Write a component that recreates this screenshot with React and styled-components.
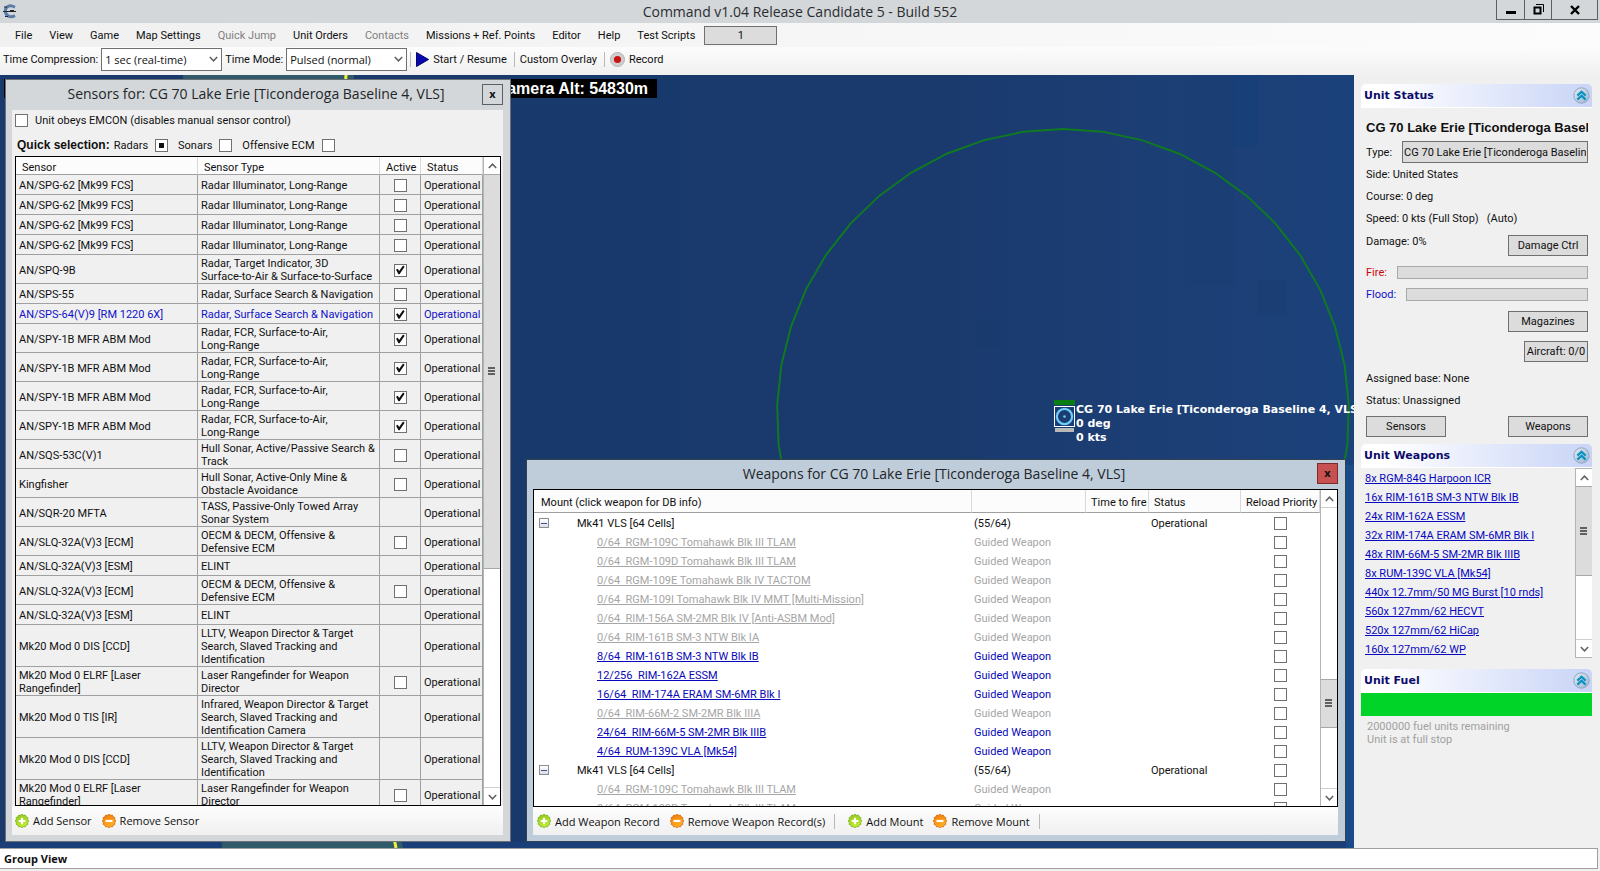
import React, { useEffect, useRef } from 'react';
import styled, { createGlobalStyle, css } from 'styled-components';

const ui = 'Roboto, "Liberation Sans", sans-serif';
const segoe = '"Open Sans", "Noto Sans", sans-serif';

const GlobalStyle = createGlobalStyle`
  *, *::before, *::after { box-sizing: border-box; }
  body { margin: 0; background: #f0f0f0; color: #101010; font: 11px/13px ${ui}; }
  button, input, select { font: inherit; color: inherit; margin: 0; border-radius: 0; }
`;

/* ---------- application frame ---------- */

const Shell = styled.div`
  display: flex;
  flex-direction: column;
  min-height: 100vh;
  overflow: hidden;
`;

const TitleBar = styled.header`
  display: grid;
  grid-template-columns: 1fr auto 1fr;
  align-items: center;
  height: 23px;
  background: #d3d7d9;
`;

const AppIcon = styled.svg`
  width: 15px;
  height: 15px;
  margin-left: 2px;
`;

const AppTitle = styled.h1`
  margin: 0;
  font: 14px/22px ${segoe};
  color: #2a2d30;
`;

const CaptionButtons = styled.div`
  display: flex;
  align-self: start;
  justify-self: end;
  margin-right: 2px;
  border: 1px solid #5d6063;
  border-top: 0;
`;

const CaptionButton = styled.button`
  display: flex;
  align-items: center;
  justify-content: center;
  width: ${(p) => (p.$wide ? 46 : 27)}px;
  height: 19px;
  padding: 0;
  border: 0;
  background: #d3d7d9;
  & + & { border-left: 1px solid #5d6063; }
`;

const MenuBar = styled.nav`
  display: flex;
  align-items: center;
  gap: 1px;
  height: 24px;
  padding-left: 7px;
  background: linear-gradient(90deg, #f0f0f0, #fcfcfc);
`;

const MenuItem = styled.button`
  padding: 0 8px;
  border: 0;
  background: none;
  white-space: nowrap;
  &:disabled { color: #808080; }
`;

const ScriptButton = styled.button`
  width: 73px;
  height: 19px;
  padding: 0;
  border: 1px solid #707070;
  background: #dcdcdc;
`;

const ToolStrip = styled.div`
  display: flex;
  align-items: center;
  height: 28px;
  padding: 0 3px 4px;
  background: linear-gradient(#fcfcfc, #f0f0f0);
`;

const ToolLabel = styled.label`
  margin-right: 3px;
  white-space: nowrap;
`;

const SelectBox = styled.span`
  position: relative;
  margin-right: 3px;
  svg { position: absolute; right: 4px; top: 8px; pointer-events: none; }
`;

const Select = styled.select`
  display: block;
  width: 121px;
  height: 23px;
  padding: 0 3px;
  appearance: none;
  border: 1px solid #707070;
  background: #fff;
  font: 11px/15px ${segoe};
`;

const Separator = styled.span`
  width: 1px;
  height: 15px;
  margin: 0 4px 0 ${(p) => (p.$spread ? 6 : 0)}px;
  background: #b8b8b8;
`;

const ToolButton = styled.button`
  display: flex;
  align-items: center;
  gap: 4px;
  padding: 0 1px;
  border: 0;
  background: none;
  white-space: nowrap;
`;

const Workspace = styled.main`
  display: grid;
  grid-template-columns: minmax(0, 1fr) 246px;
  flex: 1;
`;

const StatusBar = styled.footer`
  height: 21px;
  margin: 0 2px 2px 0;
  padding-left: 4px;
  border: 1px solid #a0a0a0;
  border-left: 0;
  background: #fff;
  font: bold 11px/20px ${segoe};
`;

/* ---------- map and what floats on it ---------- */

const MapView = styled.section`
  position: relative;
  overflow: hidden;
  background: linear-gradient(90deg, #1a396c 65%, #1c4077 92%, #1b417b);
`;

const MapCanvas = styled.svg`
  position: absolute;
  width: 100%;
  height: 100%;
`;

const CameraReadout = styled.div`
  position: absolute;
  left: 4px;
  top: 4px;
  width: 653px;
  padding-right: 9px;
  background: #000;
  color: #fff;
  font: bold 16px/19px "Liberation Sans", sans-serif;
  text-align: right;
`;

const UnitMarker = styled.div`
  position: absolute;
  left: 1054px;
  top: 325px;
  display: flex;
  gap: 1px;
  color: #fff;
  font: bold 11px/14px "DejaVu Sans", sans-serif;
  white-space: nowrap;
  svg { flex: none; }
`;

const MarkerText = styled.div`
  padding-top: 3px;
`;

const Win = styled.section`
  position: absolute;
  display: flex;
  flex-direction: column;
  padding: 0 7px 6px 6px;
  border: 1px solid ${(p) => (p.$active ? '#33424f' : '#6a7075')};
  background: ${(p) => (p.$active ? '#bfcddb' : '#d3d7d9')};
  bottom: 6px;
  ${(p) => (p.$active
    ? css`left: 526px; right: 8px; top: 384px;`
    : css`left: 5px; width: 506px; top: 4px;`)}
`;

const WinTitle = styled.h2`
  flex: 1;
  margin: 0;
  padding-left: 18px;
  text-align: center;
  font: 14px/20px ${segoe};
  color: #22262a;
  white-space: nowrap;
`;

const WinHead = styled.div`
  display: flex;
  align-items: center;
  height: ${(p) => (p.$active ? 29 : 30)}px;
  padding-bottom: 2px;
`;

const WinClose = styled.button`
  width: 21px;
  height: 21px;
  padding: 0 0 2px;
  border: 1px solid ${(p) => (p.$active ? '#7d2b28' : '#5d6063')};
  background: ${(p) => (p.$active ? '#c75050' : '#d3d7d9')};
  font: bold 11px/13px ${segoe};
`;

const WinClient = styled.div`
  display: flex;
  flex: 1;
  flex-direction: column;
  min-height: 0;
  background: #f0f0f0;
`;

const OptionRow = styled.div`
  display: flex;
  align-items: center;
  height: ${(p) => (p.$first ? 20 : 26)}px;
  padding: ${(p) => (p.$first ? 0 : 4)}px 3px 0;
`;

const Option = styled.label`
  display: flex;
  align-items: center;
  gap: 7px;
  margin-right: 10px;
`;

const Lead = styled.strong`
  margin: 0 4px 0 2px;
  font: bold 12px/13px "Liberation Sans", sans-serif;
`;

const Tick = styled.input`
  display: block;
  flex: none;
  width: 13px;
  height: 13px;
  appearance: none;
  border: 1px solid #707070;
  background: #fff;
  &:checked::before {
    content: '';
    display: block;
    width: 11px;
    height: 11px;
    background: #101010;
    clip-path: polygon(14% 48%, 30% 38%, 42% 58%, 78% 10%, 92% 20%, 46% 88%, 36% 88%);
  }
  &:indeterminate::before {
    content: '';
    display: block;
    width: 5px;
    height: 5px;
    margin: 3px;
    background: #101010;
  }
`;

const Frame = styled.div`
  display: flex;
  flex: 1;
  min-height: 0;
  margin: 0 ${(p) => (p.$inset ? '2px 0 3px' : 0)};
  border: 1px solid #000;
  background: ${(p) => (p.$inset ? '#f0f0f0' : '#fff')};
`;

const Viewport = styled.div`
  position: relative;
  flex: 1;
  min-width: 0;
  overflow: hidden;
  contain: size;
`;

const Grid = styled.table`
  width: 100%;
  table-layout: fixed;
  border-collapse: separate;
  border-spacing: 0;
  th, td { white-space: pre; overflow: hidden; }
  th {
    font-weight: normal;
    text-align: left;
    background: #fcfcfc;
    border-right: 1px solid #d9d9d9;
    border-bottom: 1px solid #a0a0a0;
  }
`;

const SensorGrid = styled(Grid)`
  th { height: 18px; padding: 3px 5px 0 6px; }
  td {
    height: 20px;
    padding: 2px 3px 0;
    border-right: 1px solid #a0a0a0;
    border-bottom: 1px solid #a0a0a0;
  }
  input { margin: 0 auto; }
`;

const SensorRow = styled.tr`
  color: ${(p) => (p.$selected ? '#1010c8' : 'inherit')};
`;

const WeaponGrid = styled(Grid)`
  th { height: 23px; padding: 3px 5px 0; }
  th:first-child { padding-left: 7px; }
  td { height: 19px; padding: 1px 2px 0; }
  input { margin: 0 auto; }
`;

const tone = { off: '#a6a6a6', on: '#0808b8', mount: 'inherit' };

const WeaponRow = styled.tr`
  color: ${(p) => tone[p.$tone]};
  a { margin-left: 61px; color: inherit; }
`;

const MountName = styled.div`
  display: flex;
  align-items: center;
  gap: 28px;
  padding-left: 3px;
`;

const Expander = styled.button`
  display: grid;
  place-items: center;
  width: 10px;
  height: 10px;
  padding: 0;
  border: 1px solid #8c8c94;
  background: linear-gradient(#fff, #dcdce4);
  &::before { content: ''; width: 6px; height: 1px; background: #3c508c; }
`;

const WinTools = styled.div`
  display: flex;
  align-items: center;
  height: ${(p) => (p.$active ? 28 : 29)}px;
  padding-left: ${(p) => (p.$active ? 3 : 2)}px;
  gap: 8px;
  background: linear-gradient(#fdfdfd, #f0f0f0);
  font: 11px/15px ${segoe};
`;

/* ---------- scroll bar ---------- */

const Bar = styled.div`
  display: flex;
  flex: none;
  flex-direction: column;
  width: 17px;
  background: #fff;
  border-left: 1px solid #b4b4b4;
`;

const BarButton = styled.button`
  display: grid;
  place-items: center;
  height: 17px;
  padding: 0;
  border: 0;
  background: #fff;
`;

const BarSpace = styled.div`
  flex: ${(p) => p.$share};
  border: solid #d0d0d0;
  border-width: ${(p) => (p.$upper ? '1px 0 0' : '0 0 1px')};
`;

const BarThumb = styled.div`
  display: grid;
  place-items: center;
  flex: ${(p) => p.$share};
  border: solid #a8a8a8;
  border-width: 1px 0;
  background: #dcdcdc;
`;

/* ---------- side panel ---------- */

const SidePanel = styled.aside`
  padding: 9px 8px 0 7px;
  background: #f0f0f0;
`;

const SectionHead = styled.h2`
  display: flex;
  align-items: center;
  justify-content: space-between;
  height: 24px;
  margin: 0;
  padding: 0 2px 0 3px;
  border-bottom: 1px solid #fff;
  border-radius: 5px 5px 0 0;
  background: linear-gradient(90deg, #fff 10%, #c9d4f7);
  color: #0c0c6c;
  font: bold 11px/14px "DejaVu Sans", sans-serif;
`;

const FoldButton = styled.button`
  display: block;
  width: 17px;
  height: 17px;
  padding: 0;
  border: 0;
  background: none;
  svg { display: block; }
`;

const StatusBody = styled.div`
  padding: 9px 4px 7px 5px;
`;

const UnitName = styled.h3`
  margin: 0 0 2px;
  overflow: hidden;
  white-space: nowrap;
  font: bold 13px/22px "Liberation Sans", sans-serif;
`;

const Field = styled.div`
  display: flex;
  align-items: center;
  justify-content: space-between;
  height: 22px;
  gap: 10px;
  white-space: pre;
  color: ${(p) => p.$color || 'inherit'};
`;

const DamageField = styled(Field)`
  align-items: flex-end;
  height: 32px;
  padding-bottom: 5px;
  span { padding-bottom: 8px; }
`;

const TypeBox = styled.input`
  flex: 1;
  min-width: 0;
  height: 22px;
  padding: 0 1px;
  border: 1px solid #707070;
  background: #dcdcdc;
`;

const Meter = styled.div`
  flex: 1;
  height: 13px;
  border: 1px solid #a8a8a8;
  background: #dcdcdc;
`;

const PanelButton = styled.button`
  width: ${(p) => (p.$small ? 64 : 80)}px;
  height: 21px;
  padding: 0;
  border: 1px solid #707070;
  background: #dcdcdc;
`;

const ButtonStack = styled.div`
  display: flex;
  flex-direction: column;
  align-items: flex-end;
  gap: 9px;
  padding: 6px 0 5px;
`;

const ButtonPair = styled.div`
  display: flex;
  justify-content: space-between;
  padding-top: 5px;
`;

const WeaponList = styled.div`
  display: flex;
  height: 190px;
  margin-bottom: 11px;
  ul { flex: 1; margin: 0; padding: 1px 4px; list-style: none; }
  li { line-height: 19px; white-space: pre; }
  a { color: #0808c0; }
`;

const PanelBar = styled(Bar)`
  border: 1px solid #b4b4b4;
  border-right: 0;
`;

const FuelGauge = styled.div`
  height: 23px;
  margin-bottom: 4px;
  background: #00d428;
`;

const FuelNote = styled.p`
  margin: 0;
  padding-left: 6px;
  color: #a0a0a0;
`;

/* ---------- drawings ---------- */

const Chevron = ({ up, size = 9, color = '#606060' }) => (
  <svg width={size} height={6} viewBox="0 0 9 6" aria-hidden="true">
    <path d={up ? 'M0.8 5 L4.5 1.2 L8.2 5' : 'M0.8 1 L4.5 4.8 L8.2 1'} fill="none" stroke={color} strokeWidth="1.5" />
  </svg>
);

const burst = Array.from({ length: 24 }, (_, i) => {
  const a = (i * Math.PI) / 12;
  const r = i % 2 ? 5.9 : 6.8;
  return `${(7 + r * Math.sin(a)).toFixed(2)},${(7 - r * Math.cos(a)).toFixed(2)}`;
}).join(' ');

const Badge = ({ minus }) => {
  const id = minus ? 'badge-minus' : 'badge-plus';
  return (
    <svg width="14" height="14" viewBox="0 0 14 14" aria-hidden="true">
      <defs>
        <linearGradient id={id} x1="0" y1="0" x2="0.4" y2="1">
          <stop offset="0" stopColor={minus ? '#f07808' : '#8cc41c'} />
          <stop offset="1" stopColor={minus ? '#ffb020' : '#c0ec30'} />
        </linearGradient>
      </defs>
      <polygon points={burst} fill={`url(#${id})`} stroke={minus ? '#d06008' : '#74a818'} strokeWidth="0.7" />
      <path d={minus ? 'M3.5 7 H10.5' : 'M3.7 7 H10.3 M7 3.7 V10.3'} stroke="#fff" strokeWidth="2.2" />
    </svg>
  );
};

const FoldIcon = () => (
  <svg width="17" height="17" viewBox="0 0 17 17" aria-hidden="true">
    <defs>
      <linearGradient id="fold" x1="0" y1="0" x2="1" y2="1">
        <stop offset="0" stopColor="#e4ecf4" />
        <stop offset="1" stopColor="#9cb4d0" />
      </linearGradient>
    </defs>
    <circle cx="8.5" cy="8.5" r="7.7" fill="url(#fold)" stroke="#8fa6bc" />
    <path d="M4.4 8.6 L8.5 4.8 L12.6 8.6 M4.4 12.6 L8.5 8.8 L12.6 12.6" fill="none" stroke="#0894c0" strokeWidth="2.2" />
  </svg>
);

const Grip = () => (
  <svg width="8" height="9" viewBox="0 0 8 9" aria-hidden="true">
    <path d="M0 1 H7 M0 4 H7 M0 7 H7" stroke="#606060" strokeWidth="2" />
  </svg>
);

/* ---------- data ---------- */

const mfr = ['AN/SPY-1B MFR ABM Mod', 'Radar, FCR, Surface-to-Air,\nLong-Range', true];
const spg = ['AN/SPG-62 [Mk99 FCS]', 'Radar Illuminator, Long-Range', false];
const ecm = ['AN/SLQ-32A(V)3 [ECM]', 'OECM & DECM, Offensive &\nDefensive ECM', false];
const esm = ['AN/SLQ-32A(V)3 [ESM]', 'ELINT'];
const ccd = ['Mk20 Mod 0 DIS [CCD]', 'LLTV, Weapon Director & Target\nSearch, Slaved Tracking and\nIdentification'];
const laser = ['Mk20 Mod 0 ELRF [Laser\nRangefinder]', 'Laser Rangefinder for Weapon\nDirector', false];

const sensors = [
  spg, spg, spg, spg,
  ['AN/SPQ-9B', 'Radar, Target Indicator, 3D\nSurface-to-Air & Surface-to-Surface', true],
  ['AN/SPS-55', 'Radar, Surface Search & Navigation', false],
  ['AN/SPS-64(V)9 [RM 1220 6X]', 'Radar, Surface Search & Navigation', true, true],
  mfr, mfr, mfr, mfr,
  ['AN/SQS-53C(V)1', 'Hull Sonar, Active/Passive Search &\nTrack', false],
  ['Kingfisher', 'Hull Sonar, Active-Only Mine &\nObstacle Avoidance', false],
  ['AN/SQR-20 MFTA', 'TASS, Passive-Only Towed Array\nSonar System'],
  ecm, esm, ecm, esm, ccd, laser,
  ['Mk20 Mod 0 TIS [IR]', 'Infrared, Weapon Director & Target\nSearch, Slaved Tracking and\nIdentification Camera'],
  ccd, laser,
];

const mount = ['mount', 'Mk41 VLS [64 Cells]'];
const weapons = [
  mount,
  ['off', '0/64  RGM-109C Tomahawk Blk III TLAM'],
  ['off', '0/64  RGM-109D Tomahawk Blk III TLAM'],
  ['off', '0/64  RGM-109E Tomahawk Blk IV TACTOM'],
  ['off', '0/64  RGM-109I Tomahawk Blk IV MMT [Multi-Mission]'],
  ['off', '0/64  RIM-156A SM-2MR Blk IV [Anti-ASBM Mod]'],
  ['off', '0/64  RIM-161B SM-3 NTW Blk IA'],
  ['on', '8/64  RIM-161B SM-3 NTW Blk IB'],
  ['on', '12/256  RIM-162A ESSM'],
  ['on', '16/64  RIM-174A ERAM SM-6MR Blk I'],
  ['off', '0/64  RIM-66M-2 SM-2MR Blk IIIA'],
  ['on', '24/64  RIM-66M-5 SM-2MR Blk IIIB'],
  ['on', '4/64  RUM-139C VLA [Mk54]'],
  mount,
  ['off', '0/64  RGM-109C Tomahawk Blk III TLAM'],
  ['off', '0/64  RGM-109D Tomahawk Blk III TLAM'],
];

const loadout = [
  '8x RGM-84G Harpoon ICR', '16x RIM-161B SM-3 NTW Blk IB', '24x RIM-162A ESSM',
  '32x RIM-174A ERAM SM-6MR Blk I', '48x RIM-66M-5 SM-2MR Blk IIIB', '8x RUM-139C VLA [Mk54]',
  '440x 12.7mm/50 MG Burst [10 rnds]', '560x 127mm/62 HECVT', '520x 127mm/62 HiCap', '160x 127mm/62 WP',
];

const menus = ['File', 'View', 'Game', 'Map Settings', 'Quick Jump', 'Unit Orders', 'Contacts',
  'Missions + Ref. Points', 'Editor', 'Help', 'Test Scripts'];

const unit = 'CG 70 Lake Erie [Ticonderoga Baseline 4, VLS]';

const rangeRing = Array.from({ length: 45 }, (_, i) => {
  const a = (i * 8 * Math.PI) / 180;
  return `${(1063 + 286 * Math.sin(a)).toFixed(1)},${(340 - 286 * Math.cos(a)).toFixed(1)}`;
}).join(' ');

/* ---------- parts ---------- */

function MixedTick(props) {
  const ref = useRef(null);
  useEffect(() => { ref.current.indeterminate = true; }, []);
  return <Tick type="checkbox" ref={ref} {...props} />;
}

function ScrollBar({ as: Part = Bar, before = 0, thumb, after }) {
  return (
    <Part>
      <BarButton aria-label="Scroll up"><Chevron up /></BarButton>
      {before > 0 && <BarSpace $upper $share={before} />}
      <BarThumb $share={thumb}><Grip /></BarThumb>
      <BarSpace $share={after} />
      <BarButton aria-label="Scroll down"><Chevron /></BarButton>
    </Part>
  );
}

function TacticalMap() {
  return (
    <MapCanvas aria-hidden="true">
      <rect x="1186" y="0" width="49" height="210" fill="#1b3d73" opacity="0.6" />
      <rect x="1230" y="0" width="28" height="71" fill="#16407a" opacity="0.6" />
      <rect x="1257" y="205" width="30" height="35" fill="#1a3b70" opacity="0.5" />
      <rect x="976" y="244" width="24" height="28" fill="#173a6c" opacity="0.6" />
      <rect x="510" y="0" width="170" height="773" fill="#133a6c" opacity="0.5" />
      <path d="M1346 390 H1400 V773 H1346 Z" fill="#1a4a88" />
      <path d="M0 767 H1346 V773 H0 Z" fill="#1a3f78" />
      <path d="M183 0 H354 L330 380 L403 773 H222 Z" fill="#305a6a" />
      <path d="M346 0 L320 380 L396 773" fill="none" stroke="#f4f038" strokeWidth="3" />
      <polygon points={rangeRing} fill="none" stroke="#0f7a22" strokeWidth="2" />
    </MapCanvas>
  );
}

function SensorsWindow() {
  return (
    <Win>
      <WinHead>
        <WinTitle>Sensors for: {unit}</WinTitle>
        <WinClose aria-label="Close sensors">x</WinClose>
      </WinHead>
      <WinClient>
        <OptionRow $first>
          <Option><Tick type="checkbox" />Unit obeys EMCON (disables manual sensor control)</Option>
        </OptionRow>
        <OptionRow>
          <Lead>Quick selection:</Lead>
          <Option>Radars<MixedTick /></Option>
          <Option>Sonars<Tick type="checkbox" /></Option>
          <Option>Offensive ECM<Tick type="checkbox" /></Option>
        </OptionRow>
        <Frame $inset>
          <Viewport>
            <SensorGrid>
              <colgroup><col /><col style={{ width: 182 }} /><col style={{ width: 41 }} /><col style={{ width: 62 }} /></colgroup>
              <thead><tr><th>Sensor</th><th>Sensor Type</th><th>Active</th><th>Status</th></tr></thead>
              <tbody>
                {sensors.map(([name, type, active, selected], i) => (
                  <SensorRow key={i} $selected={selected}>
                    <td>{name}</td>
                    <td>{type}</td>
                    <td>{active !== undefined && <Tick type="checkbox" defaultChecked={active} aria-label={`${name} active`} />}</td>
                    <td>Operational</td>
                  </SensorRow>
                ))}
              </tbody>
            </SensorGrid>
          </Viewport>
          <ScrollBar thumb={395} after={219} />
        </Frame>
        <WinTools>
          <ToolButton><Badge />Add Sensor</ToolButton>
          <ToolButton><Badge minus />Remove Sensor</ToolButton>
        </WinTools>
      </WinClient>
    </Win>
  );
}

function WeaponsWindow() {
  return (
    <Win $active>
      <WinHead $active>
        <WinTitle>Weapons for {unit}</WinTitle>
        <WinClose $active aria-label="Close weapons">x</WinClose>
      </WinHead>
      <WinClient>
        <Frame>
          <Viewport>
            <WeaponGrid>
              <colgroup>
                <col /><col style={{ width: 114 }} /><col style={{ width: 63 }} /><col style={{ width: 92 }} /><col style={{ width: 79 }} />
              </colgroup>
              <thead>
                <tr><th>Mount (click weapon for DB info)</th><th aria-label="Kind" /><th>Time to fire</th><th>Status</th><th>Reload Priority</th></tr>
              </thead>
              <tbody>
                {weapons.map(([kind, name], i) => (
                  <WeaponRow key={i} $tone={kind}>
                    <td>{kind === 'mount' ? <MountName><Expander aria-label="Collapse" />{name}</MountName> : <a href="#weapon">{name}</a>}</td>
                    <td>{kind === 'mount' ? '(55/64)' : 'Guided Weapon'}</td>
                    <td />
                    <td>{kind === 'mount' ? 'Operational' : ''}</td>
                    <td><Tick type="checkbox" aria-label={`${name} reload priority`} /></td>
                  </WeaponRow>
                ))}
              </tbody>
            </WeaponGrid>
          </Viewport>
          <ScrollBar before={173} thumb={48} after={61} />
        </Frame>
        <WinTools $active>
          <ToolButton><Badge />Add Weapon Record</ToolButton>
          <ToolButton><Badge minus />Remove Weapon Record(s)</ToolButton>
          <Separator />
          <ToolButton><Badge />Add Mount</ToolButton>
          <ToolButton><Badge minus />Remove Mount</ToolButton>
          <Separator />
        </WinTools>
      </WinClient>
    </Win>
  );
}

function SectionTitle({ children }) {
  return (
    <SectionHead>
      {children}
      <FoldButton aria-label={`Fold ${children}`}><FoldIcon /></FoldButton>
    </SectionHead>
  );
}

function UnitPanel() {
  return (
    <SidePanel>
      <SectionTitle>Unit Status</SectionTitle>
      <StatusBody>
        <UnitName>{unit}</UnitName>
        <Field as="label">Type:<TypeBox readOnly defaultValue={unit} /></Field>
        <Field>Side: United States</Field>
        <Field>Course: 0 deg</Field>
        <Field>{'Speed: 0 kts (Full Stop)   (Auto)'}</Field>
        <DamageField><span>Damage: 0%</span><PanelButton>Damage Ctrl</PanelButton></DamageField>
        <Field $color="#c80808">Fire:<Meter /></Field>
        <Field $color="#1010c8">Flood:<Meter /></Field>
        <ButtonStack>
          <PanelButton>Magazines</PanelButton>
          <PanelButton $small>Aircraft: 0/0</PanelButton>
        </ButtonStack>
        <Field>Assigned base: None</Field>
        <Field>Status: Unassigned</Field>
        <ButtonPair>
          <PanelButton>Sensors</PanelButton>
          <PanelButton>Weapons</PanelButton>
        </ButtonPair>
      </StatusBody>
      <SectionTitle>Unit Weapons</SectionTitle>
      <WeaponList>
        <ul>{loadout.map((w) => <li key={w}><a href="#weapon">{w}</a></li>)}</ul>
        <ScrollBar as={PanelBar} thumb={91} after={65} />
      </WeaponList>
      <SectionTitle>Unit Fuel</SectionTitle>
      <FuelGauge />
      <FuelNote>2000000 fuel units remaining</FuelNote>
      <FuelNote>Unit is at full stop</FuelNote>
    </SidePanel>
  );
}

export default function App() {
  return (
    <Shell>
      <GlobalStyle />
      <TitleBar>
        <AppIcon viewBox="0 0 15 15" aria-hidden="true">
          <path d="M13 3.2 C7 0 3 3 3.4 7.5 C3.8 12 8 14 13 11.6" fill="none" stroke="#5c7ca8" strokeWidth="3" />
          <path d="M1 7.5 H14 M8 6.5 H12 M2 3 H5 M3 12.5 H6" stroke="#20242c" strokeWidth="1" />
        </AppIcon>
        <AppTitle>Command v1.04 Release Candidate 5 - Build 552</AppTitle>
        <CaptionButtons>
          <CaptionButton aria-label="Minimise">
            <svg width="11" height="11"><path d="M1 8.5 H11" stroke="#000" strokeWidth="3" /></svg>
          </CaptionButton>
          <CaptionButton aria-label="Restore">
            <svg width="11" height="11">
              <path d="M3 0.5 H10.5 V8" fill="none" stroke="#000" />
              <rect x="1.5" y="3.5" width="6" height="6" fill="none" stroke="#000" strokeWidth="2" />
            </svg>
          </CaptionButton>
          <CaptionButton $wide aria-label="Close">
            <svg width="10" height="10"><path d="M1 1 L9 9 M9 1 L1 9" stroke="#000" strokeWidth="2.4" /></svg>
          </CaptionButton>
        </CaptionButtons>
      </TitleBar>
      <MenuBar>
        {menus.map((m) => <MenuItem key={m} disabled={m === 'Quick Jump' || m === 'Contacts'}>{m}</MenuItem>)}
        <ScriptButton>1</ScriptButton>
      </MenuBar>
      <ToolStrip>
        <ToolLabel htmlFor="compression">Time Compression:</ToolLabel>
        <SelectBox>
          <Select id="compression"><option>1 sec (real-time)</option></Select>
          <Chevron />
        </SelectBox>
        <ToolLabel htmlFor="mode">Time Mode:</ToolLabel>
        <SelectBox>
          <Select id="mode"><option>Pulsed (normal)</option></Select>
          <Chevron />
        </SelectBox>
        <Separator />
        <ToolButton>
          <svg width="13" height="15" aria-hidden="true"><path d="M0.5 0.5 L12.5 7.5 L0.5 14.5 Z" fill="#0808b0" stroke="#04046c" /></svg>
          Start / Resume
        </ToolButton>
        <Separator $spread />
        <ToolButton>Custom Overlay</ToolButton>
        <Separator $spread />
        <ToolButton>
          <svg width="15" height="15" aria-hidden="true">
            <circle cx="7.5" cy="7.5" r="7" fill="#cfcfcf" stroke="#b4b4b4" />
            <circle cx="7.5" cy="7.5" r="3.6" fill="#c81414" />
          </svg>
          Record
        </ToolButton>
      </ToolStrip>
      <Workspace>
        <MapView>
          <TacticalMap />
          <CameraReadout>Camera Alt: 54830m</CameraReadout>
          <UnitMarker>
            <svg width="21" height="33" aria-hidden="true">
              <rect x="0" y="0" width="21" height="5" fill="#0a7c14" />
              <rect x="0.5" y="6.5" width="20" height="20" fill="none" stroke="#fff" />
              <circle cx="10.5" cy="16.5" r="7.6" fill="none" stroke="#70ccf8" strokeWidth="2.2" />
              <circle cx="10.5" cy="16.5" r="1.3" fill="#70ccf8" />
              <rect x="1" y="28" width="19" height="4" fill="#b8b8b8" />
            </svg>
            <MarkerText>
              <div>{unit}</div>
              <div>0 deg</div>
              <div>0 kts</div>
            </MarkerText>
          </UnitMarker>
          <SensorsWindow />
          <WeaponsWindow />
        </MapView>
        <UnitPanel />
      </Workspace>
      <StatusBar>Group View</StatusBar>
    </Shell>
  );
}
